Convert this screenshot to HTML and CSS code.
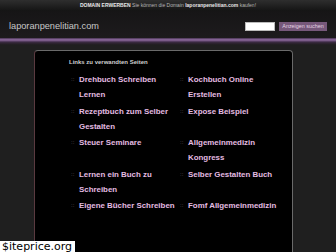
FILE: index.html
```html
<!DOCTYPE html>
<html lang="de">
<head>
<meta charset="utf-8">
<title>laporanpenelitian.com</title>
<link rel="stylesheet" href="styles.css">
</head>
<body>
<div class="topbar"><b>DOMAIN ERWERBEN</b> Sie können die Domain <b>laporanpenelitian.com</b> kaufen!</div>
<header class="header">
  <div class="logo">laporanpenelitian.com</div>
  <form class="search">
    <input class="search-input" type="text">
    <button class="search-btn" type="button">Anzeigen suchen</button>
  </form>
</header>
<div class="rule"></div>
<main class="main">
  <section class="box">
    <h2 class="box-title">Links zu verwandten Seiten</h2>
    <ul class="links">
      <li><span class="sep">::</span><a>Drehbuch Schreiben Lernen</a></li>
      <li><span class="sep">::</span><a>Kochbuch Online Erstellen</a></li>
      <li><span class="sep">::</span><a>Rezeptbuch zum Selber Gestalten</a></li>
      <li><span class="sep">::</span><a>Expose Beispiel</a></li>
      <li><span class="sep">::</span><a>Steuer Seminare</a></li>
      <li><span class="sep">::</span><a>Allgemeinmedizin Kongress</a></li>
      <li><span class="sep">::</span><a>Lernen ein Buch zu Schreiben</a></li>
      <li><span class="sep">::</span><a>Selber Gestalten Buch</a></li>
      <li><span class="sep">::</span><a>Eigene Bücher Schreiben</a></li>
      <li><span class="sep">::</span><a>Fomf Allgemeinmedizin</a></li>
    </ul>
  </section>
</main>
<div class="watermark">$iteprice.org</div>
</body>
</html>
```
FILE: styles.css
```css
* { box-sizing: border-box; }
html, body {
  margin: 0;
  padding: 0;
}
body {
  width: 336px;
  height: 252px;
  overflow: hidden;
  background: #1f1f1f;
  font-family: "Liberation Sans", Arial, sans-serif;
  position: relative;
}
.topbar {
  height: 11px;
  line-height: 11px;
  background: linear-gradient(#2e2e2e, #141414);
  color: #b5b5b5;
  font-size: 5px;
  text-align: center;
  white-space: nowrap;
}
.topbar b { color: #e8e8e8; }
.header {
  height: 27px;
  background: linear-gradient(#161516, #1d1b1d);
  display: flex;
  align-items: center;
  justify-content: space-between;
  padding: 3px 9px 0 9px;
}
.logo {
  color: #c8c8c8;
  font-size: 9.2px;
}
.search {
  display: flex;
  align-items: center;
  gap: 4px;
  margin: 0;
}
.search-input {
  width: 30px;
  height: 9px;
  border: 1px solid #bbb;
  background: #fff;
  padding: 0;
  margin: 0;
}
.search-btn {
  height: 9px;
  width: 48px;
  padding: 0;
  margin: 0;
  border: 0;
  background: #76587a;
  color: #e4d4e4;
  font-family: "Liberation Sans", Arial, sans-serif;
  font-size: 5.4px;
  line-height: 9px;
}
.rule {
  height: 7px;
  background: linear-gradient(#3a2a40 0, #7a5a8c 1px, #8a6a98 2px, #6a4c78 3px, #3c2c44 4px, #262027 6px, #1f1f1f 7px);
}
.main {
  height: 207px;
  overflow: hidden;
  padding: 5px 0 0 34px;
}
.box {
  width: 259px;
  height: 230px;
  background: #000;
  border: 1px solid #6a6a6a;
  border-left-color: #5a3a40;
  border-radius: 4px;
  padding: 7px 0 0 34px;
}
.box-title {
  margin: 0 0 6px 0;
  font-size: 6px;
  line-height: 8px;
  font-weight: bold;
  color: #cfcfcf;
}
.links {
  list-style: none;
  margin: 0 0 0 2px;
  padding: 0;
  display: grid;
  grid-template-columns: 109px 109px;
  row-gap: 1.5px;
}
.links li {
  display: flex;
  font-size: 7.9px;
  line-height: 15px;
  font-weight: bold;
}
.sep {
  width: 8px;
  flex: none;
  color: #6e626e;
  font-size: 6px;
  font-weight: normal;
}
.links a {
  width: 100px;
  color: #e4bce2;
}
.watermark {
  position: absolute;
  left: 0;
  bottom: 0;
  height: 11px;
  line-height: 11px;
  padding: 0 3px 0 2px;
  background: #fff;
  color: #000;
  font-family: "DejaVu Sans", sans-serif;
  font-size: 11px;
}
```
